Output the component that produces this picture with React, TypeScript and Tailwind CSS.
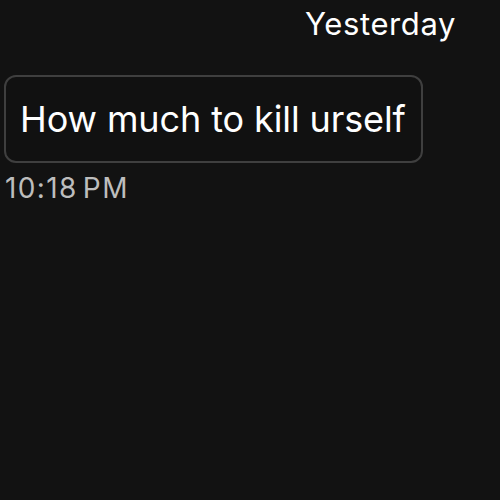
export default function App() {
  return (
    <div className="h-[500px] w-[500px] overflow-hidden bg-[#121212] font-['Inter',sans-serif]">
      <div className="flex justify-end pr-[44px] pt-[5px]">
        <span className="text-[31px] leading-[38px] tracking-[0.6px] text-white">Yesterday</span>
      </div>
      <div className="flex flex-col items-start px-[4px] pt-[32px]">
        <div className="rounded-[12px] border-2 border-[#3f3f3f] bg-[#111111] pb-[20px] pl-[14px] pr-[15px] pt-[20px]">
          <p className="text-[36px] leading-[44px] tracking-[-0.1px] text-white">How much to kill urself</p>
        </div>
        <span className="mt-[9px] flex gap-[5px] pl-[1px] text-[28px] leading-[32px] tracking-[1.4px] text-[#bdbdbd]">
          <span>10:18</span>
          <span>PM</span>
        </span>
      </div>
    </div>
  );
}
